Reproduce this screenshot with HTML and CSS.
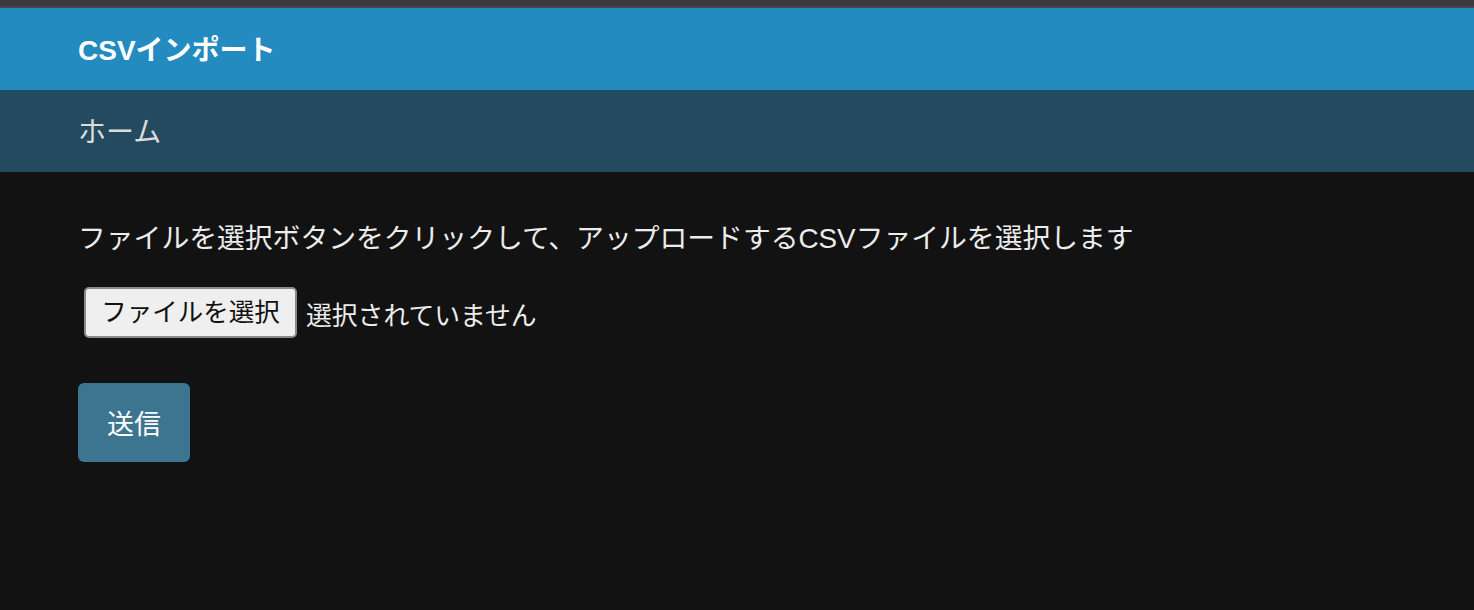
FILE: index.html
```html
<!DOCTYPE html>
<html lang="ja">
<head>
<meta charset="utf-8">
<title>CSVインポート</title>
<link rel="stylesheet" href="styles.css">
</head>
<body>
<div class="topstrip"></div>
<header class="appbar"><h1 class="title">CSVインポート</h1></header>
<nav class="navbar"><a class="navlink" href="#">ホーム</a></nav>
<main class="content">
  <p class="lead">ファイルを選択ボタンをクリックして、アップロードするCSVファイルを選択します</p>
  <div class="filerow">
    <button class="filebtn" type="button">ファイルを選択</button>
    <span class="filestatus">選択されていません</span>
  </div>
  <button class="submit" type="button">送信</button>
</main>
</body>
</html>
```

FILE: styles.css
```css
html, body {
  margin: 0;
  padding: 0;
  background: #121212;
  font-family: "Liberation Sans", "Noto Sans CJK JP", sans-serif;
  color: #ececec;
}
.topstrip {
  height: 6px;
  background: #3b3b3b;
  border-bottom: 2px solid #464646;
}
.appbar {
  height: 82px;
  box-sizing: border-box;
  padding: 4px 0 0 78px;
  background: #238bbf;
  display: flex;
  align-items: center;
}
.title {
  margin: 0;
  font-size: 28px;
  font-weight: 700;
  color: #ffffff;
  line-height: 1;
}
.navbar {
  height: 82px;
  box-sizing: border-box;
  padding: 4px 0 0 78px;
  background: #234a5e;
  display: flex;
  align-items: center;
}
.navlink {
  font-size: 28px;
  color: #dcdcdc;
  text-decoration: none;
  line-height: 1;
}
.content {
  padding: 0 78px;
  display: flex;
  flex-direction: column;
  align-items: flex-start;
}
.lead {
  margin: 47px 0 0;
  font-size: 27.8px;
  line-height: 40px;
  color: #ececec;
}
.filerow {
  margin-top: 28px;
  display: flex;
  align-items: center;
  gap: 9px;
}
.filebtn {
  margin-left: 6px;
  width: 213px;
  height: 51px;
  background: #efefef;
  border: 2px solid #8a8a8a;
  border-radius: 5px;
  font-family: inherit;
  font-size: 25.5px;
  color: #111;
  padding: 1px 0 0;
  line-height: 1;
}
.filestatus {
  font-size: 25.8px;
  color: #ececec;
  padding-top: 1px;
}
.submit {
  margin-top: 45px;
  width: 112px;
  height: 79px;
  background: #3d7590;
  border: none;
  border-radius: 6px;
  color: #ffffff;
  font-family: inherit;
  font-size: 27px;
  padding: 0;
}
```
